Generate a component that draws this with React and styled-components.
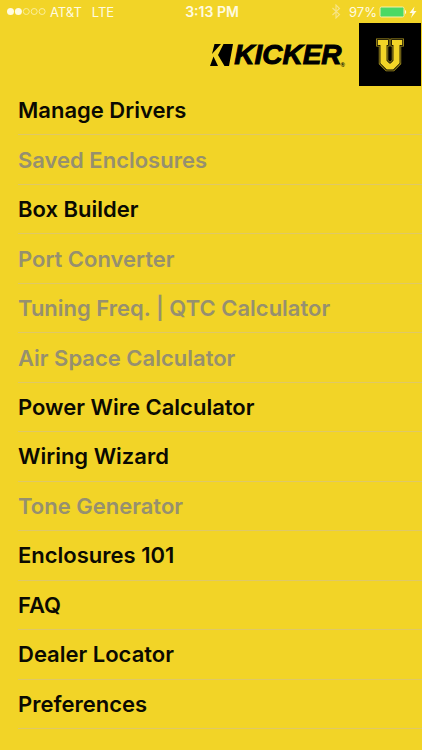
import React from "react";
import styled, { createGlobalStyle } from "styled-components";

const GlobalStyle = createGlobalStyle`
  *, *::before, *::after { box-sizing: border-box; }
  body {
    margin: 0;
    background: #f2d427;
    color: #0b0a02;
    font-family: Inter, "Liberation Sans", sans-serif;
  }
`;

const Page = styled.div`
  display: flex;
  flex-direction: column;
  min-height: 100vh;
  padding-bottom: 21px;
`;

const StatusBar = styled.div`
  display: grid;
  grid-template-columns: 1fr auto 1fr;
  align-items: center;
  height: 23px;
  padding: 0 5px 0 7px;
  color: #fffbe0;
  font-size: 13px;
  line-height: 16px;
`;

const StatusGroup = styled.div`
  display: flex;
  align-items: center;
  justify-content: ${(p) => (p.$end ? "flex-end" : "flex-start")};
  gap: ${(p) => (p.$end ? "2px" : "4px")};
`;

const Network = styled.span`
  margin-left: 6px;
`;

const Clock = styled.time`
  font-size: 14px;
  font-weight: 600;
`;

const Header = styled.header`
  display: flex;
  align-items: center;
  justify-content: flex-end;
  gap: 14px;
  height: 63px;
  padding-right: 1px;
`;

const Brand = styled.div`
  display: flex;
  align-items: center;
  gap: 1px;
  color: #000;
`;

const BrandName = styled.span`
  font: italic 700 28px/32px "Liberation Sans", Arial, sans-serif;
  -webkit-text-stroke: 1px #000;
`;

const Registered = styled.span`
  align-self: flex-end;
  margin-left: -2px;
  font: 700 6px/12px "Liberation Sans", Arial, sans-serif;
`;

const EmblemButton = styled.button`
  display: flex;
  align-items: center;
  justify-content: center;
  width: 62px;
  height: 63px;
  padding: 0;
  border: 0;
  background: #000;
`;

const Menu = styled.ul`
  flex: 1;
  display: grid;
  grid-auto-rows: 1fr;
  margin: 0;
  padding: 0 0 0 18px;
  list-style: none;
`;

const MenuItem = styled.li`
  display: flex;
  min-height: 44px;
  border-bottom: 1px solid #dfc866;
`;

const MenuButton = styled.button`
  flex: 1;
  padding: 0;
  border: 0;
  background: none;
  color: #0b0a02;
  font: 600 22px/28px Inter, "Liberation Sans", sans-serif;
  text-align: left;
  &:disabled { color: #96906f; }
`;

const items = [
  { label: "Manage Drivers" },
  { label: "Saved Enclosures", disabled: true },
  { label: "Box Builder" },
  { label: "Port Converter", disabled: true },
  { label: "Tuning Freq. | QTC Calculator", disabled: true },
  { label: "Air Space Calculator", disabled: true },
  { label: "Power Wire Calculator" },
  { label: "Wiring Wizard" },
  { label: "Tone Generator", disabled: true },
  { label: "Enclosures 101" },
  { label: "FAQ" },
  { label: "Dealer Locator" },
  { label: "Preferences" },
];

const Signal = () => (
  <svg width="39" height="9" viewBox="0 0 39 9" aria-hidden="true">
    {[0, 1, 2, 3, 4].map((n) => (
      <circle
        key={n}
        cx={3.5 + n * 7.9}
        cy="4.5"
        r={n < 2 ? 3.5 : 3}
        fill={n < 2 ? "#fffbe0" : "none"}
        stroke={n < 2 ? "none" : "#fbee9c"}
      />
    ))}
  </svg>
);

const Bluetooth = () => (
  <svg width="16" height="15" viewBox="0 0 16 15" aria-hidden="true">
    <path d="M1.500 4 8.500 10.500 5 14V1l3.500 3.500L1.500 11" fill="none" stroke="#f7e488" strokeWidth="1.100" />
  </svg>
);

const Battery = () => (
  <svg width="28" height="12" viewBox="0 0 28 12" aria-hidden="true">
    <rect x="1" y="1" width="24" height="10" rx="1.500" fill="#4cd964" stroke="#fbf0a8" />
    <path d="M26 4c1.500.4 1.500 3.600 0 4z" fill="#fffbe0" />
  </svg>
);

const Bolt = () => (
  <svg width="8" height="12" viewBox="0 0 8 12" aria-hidden="true">
    <path d="M5.500.5.500 7H3.500L2 12 7.500 5H4.500z" fill="#fffbe0" />
  </svg>
);

const BrandMark = () => (
  <svg width="23" height="22" viewBox="0 0 23 22" aria-hidden="true">
    <path d="M4.500 0h6.500L2 10zM13.500 0H23l-4 22h-4.500L8 11zM3.500 12.500 8 22H0z" fill="#000" />
  </svg>
);

const emblemLayers = [
  { color: "#b39c20", spread: 3.2 },
  { color: "#000", spread: 1.6 },
  { color: "#f2d427", spread: 0 },
];

const Emblem = () => (
  <svg width="28" height="34" viewBox="0 0 28 34" fill="none" aria-hidden="true">
    {emblemLayers.map(({ color, spread }) => (
      <g key={color} stroke={color}>
        <path d="M4.200 4.500H9.500M18.500 4.500H23.800" strokeWidth={5 + spread} strokeLinecap="square" />
        <path d="M7.500 5V24L12 28.500H16L20.500 24V5" strokeWidth={6.2 + spread} />
      </g>
    ))}
  </svg>
);

export default function App() {
  return (
    <>
      <GlobalStyle />
      <Page>
        <StatusBar>
          <StatusGroup>
            <Signal />
            <span>AT&amp;T</span>
            <Network>LTE</Network>
          </StatusGroup>
          <Clock>3:13 PM</Clock>
          <StatusGroup $end>
            <Bluetooth />
            <span>97%</span>
            <Battery />
            <Bolt />
          </StatusGroup>
        </StatusBar>
        <Header>
          <Brand>
            <BrandMark />
            <BrandName>KICKER</BrandName>
            <Registered>®</Registered>
          </Brand>
          <EmblemButton type="button" aria-label="Kicker U">
            <Emblem />
          </EmblemButton>
        </Header>
        <Menu>
          {items.map(({ label, disabled }) => (
            <MenuItem key={label}>
              <MenuButton type="button" disabled={disabled}>
                {label}
              </MenuButton>
            </MenuItem>
          ))}
        </Menu>
      </Page>
    </>
  );
}
